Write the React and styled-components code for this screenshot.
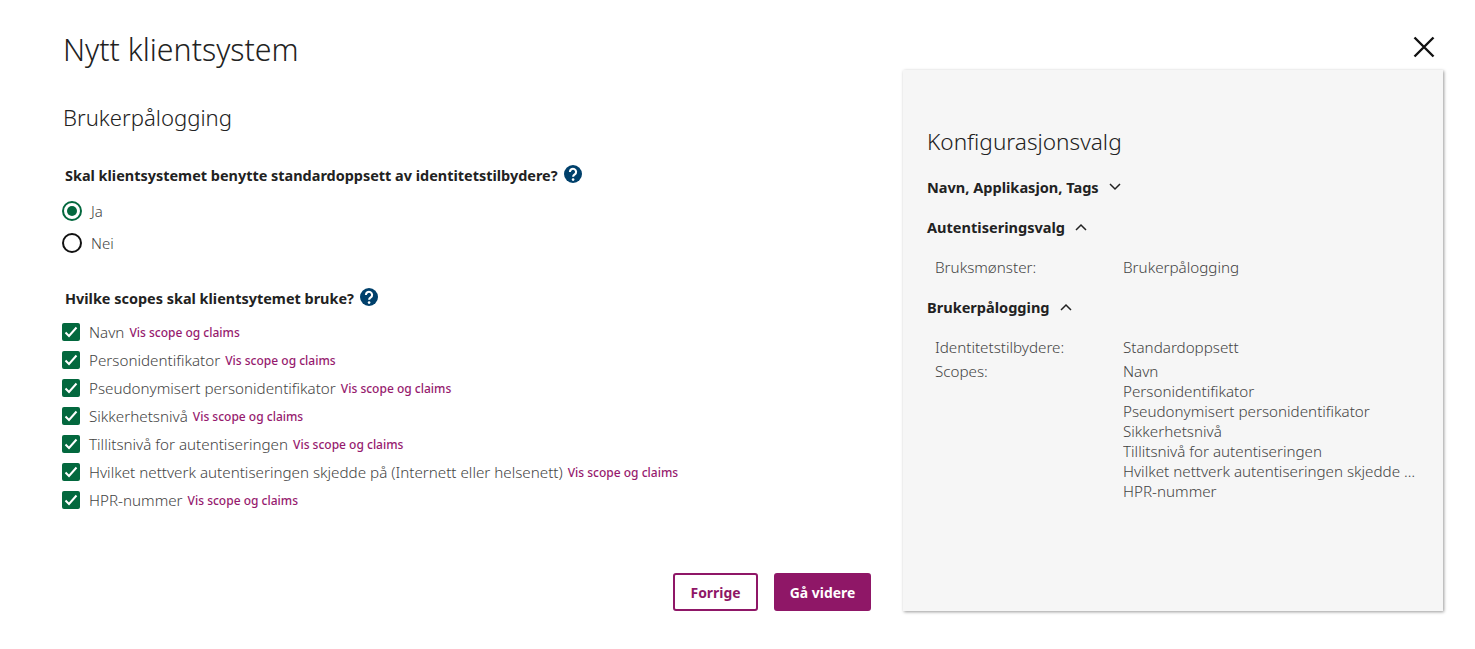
import React from "react";
import styled, { createGlobalStyle } from "styled-components";

const Global = createGlobalStyle`
  html, body { margin: 0; padding: 0; background: #fff; }
  body { font-family: "Noto Sans", "Open Sans", sans-serif; color: #333; overflow: hidden; }
`;

const Page = styled.div`
  position: relative;
  width: 1475px;
  height: 649px;
  box-sizing: border-box;
  display: grid;
  grid-template-columns: 808px 540px;
  column-gap: 32px;
  padding: 0 0 0 63px;
`;
const Main = styled.main`
  display: flex;
  flex-direction: column;
`;
const Title = styled.h1`
  margin: 30px 0 0;
  font-size: 30.3px;
  line-height: 40px;
  font-weight: 300;
  color: #222;
`;
const SubTitle = styled.h2`
  margin: 32px 0 0;
  font-size: 22.1px;
  line-height: 30px;
  font-weight: 300;
  color: #222;
`;
const Question = styled.div`
  display: flex;
  align-items: center;
  gap: 6px;
  margin-left: 2px;
  margin-top: ${(p) => p.$top}px;
  font-size: 14.45px;
  line-height: 22px;
  font-weight: 700;
  color: #222;
`;
const Help = styled.svg`
  width: 18px;
  height: 18px;
  margin-top: -5px;
`;
const RadioRow = styled.div`
  display: flex;
  align-items: center;
  gap: 9px;
  height: 32px;
  margin-left: -1px;
  font-size: 15px;
  font-weight: 300;
  color: #444;
`;
const RadioDot = styled.span`
  width: 20px;
  height: 20px;
  box-sizing: border-box;
  border-radius: 50%;
  border: 2px solid ${(p) => (p.$on ? "#03683e" : "#111")};
  display: flex;
  align-items: center;
  justify-content: center;
  &::after {
    content: "";
    width: 10px;
    height: 10px;
    border-radius: 50%;
    background: ${(p) => (p.$on ? "#03683e" : "transparent")};
  }
`;
const Radios = styled.div`
  margin-top: 8px;
  display: flex;
  flex-direction: column;
`;
const Checks = styled.div`
  margin-top: 8px;
  display: flex;
  flex-direction: column;
`;
const CheckRow = styled.div`
  display: flex;
  align-items: center;
  height: 28px;
  margin-left: -1px;
  font-size: 15.2px;
  font-weight: 300;
  color: #444;
`;
const Box = styled.span`
  flex: none;
  width: 18px;
  height: 18px;
  margin-right: 9px;
  border-radius: 2px;
  background: #03683e;
  display: flex;
  align-items: center;
  justify-content: center;
`;
const ScopeLink = styled.a`
  margin-left: 5px;
  font-size: 12px;
  font-weight: 500;
  color: #961a6e;
`;
const Actions = styled.div`
  margin-top: 59px;
  display: flex;
  justify-content: flex-end;
  gap: 16px;
`;
const Button = styled.button`
  height: 38px;
  width: ${(p) => p.$w}px;
  box-sizing: border-box;
  border-radius: 3px;
  border: 2px solid #8f1767;
  background: ${(p) => (p.$primary ? "#8f1767" : "#fff")};
  color: ${(p) => (p.$primary ? "#fff" : "#8f1767")};
  font: 700 13.9px "Noto Sans", sans-serif;
  padding: 0;
`;
const Panel = styled.aside`
  margin-top: 70px;
  height: 541px;
  box-sizing: border-box;
  padding: 55px 24px 0;
  background: #f6f6f6;
  box-shadow: 1px 1px 3px rgba(0, 0, 0, 0.4);
`;
const PanelTitle = styled.h2`
  margin: 0;
  font-size: 22.6px;
  line-height: 34px;
  font-weight: 300;
  color: #222;
`;
const SectionHead = styled.div`
  display: flex;
  align-items: center;
  gap: 10px;
  height: 24px;
  margin-top: ${(p) => p.$top}px;
  font-size: 14.55px;
  font-weight: 700;
  color: #222;
`;
const Details = styled.dl`
  margin: ${(p) => p.$top}px 0 0 8px;
  display: grid;
  grid-template-columns: 188px 296px;
  row-gap: 4px;
  font-size: 15.2px;
  line-height: 20px;
  font-weight: 300;
  color: #444;
`;
const Term = styled.dt``;
const Value = styled.dd`
  margin: 0;
`;
const Line = styled.div`
  white-space: nowrap;
  overflow: hidden;
  text-overflow: ellipsis;
`;
const Close = styled.button`
  position: absolute;
  left: 1412px;
  top: 35px;
  width: 24px;
  height: 24px;
  padding: 0;
  border: 0;
  background: none;
`;

const HelpIcon = () => (
  <Help viewBox="0 0 18 18">
    <circle cx="9" cy="9" r="9" fill="#00406b" />
    <path d="M5.9 6.9a3.1 3.1 0 1 1 4.9 2.5c-1.1.8-1.7 1.2-1.7 2.4" fill="none" stroke="#fff" strokeWidth="2.1" />
    <circle cx="9.1" cy="14.6" r="1.3" fill="#fff" />
  </Help>
);
const Chevron = ({ up }) => (
  <svg width="12" height="8" viewBox="0 0 12 8" fill="none" stroke="#222" strokeWidth="1.5">
    <path d={up ? "M1 7l5-5 5 5" : "M1 1l5 5 5-5"} />
  </svg>
);

const scopes = [
  "Navn",
  "Personidentifikator",
  "Pseudonymisert personidentifikator",
  "Sikkerhetsnivå",
  "Tillitsnivå for autentiseringen",
  "Hvilket nettverk autentiseringen skjedde på (Internett eller helsenett)",
  "HPR-nummer",
];

export default function App() {
  return (
    <Page>
      <Global />
      <Main>
        <Title>Nytt klientsystem</Title>
        <SubTitle>Brukerpålogging</SubTitle>
        <Question $top={33}>
          Skal klientsystemet benytte standardoppsett av identitetstilbydere? <HelpIcon />
        </Question>
        <Radios>
          <RadioRow><RadioDot $on /> Ja</RadioRow>
          <RadioRow><RadioDot /> Nei</RadioRow>
        </Radios>
        <Question $top={29}>
          Hvilke scopes skal klientsytemet bruke? <HelpIcon />
        </Question>
        <Checks>
          {scopes.map((s) => (
            <CheckRow key={s}>
              <Box>
                <svg width="14" height="12" viewBox="0 0 14 12" fill="none" stroke="#fff" strokeWidth="2">
                  <path d="M1.5 6.5l3.5 3.5 7.5-8.5" />
                </svg>
              </Box>
              {s} <ScopeLink>Vis scope og claims</ScopeLink>
            </CheckRow>
          ))}
        </Checks>
        <Actions>
          <Button $w={85}>Forrige</Button>
          <Button $w={97} $primary>Gå videre</Button>
        </Actions>
      </Main>
      <Panel>
        <PanelTitle>Konfigurasjonsvalg</PanelTitle>
        <SectionHead $top={16}>Navn, Applikasjon, Tags <Chevron /></SectionHead>
        <SectionHead $top={16}>Autentiseringsvalg <Chevron up /></SectionHead>
        <Details $top={18}>
          <Term>Bruksmønster:</Term>
          <Value>Brukerpålogging</Value>
        </Details>
        <SectionHead $top={18}>Brukerpålogging <Chevron up /></SectionHead>
        <Details $top={18}>
          <Term>Identitetstilbydere:</Term>
          <Value>Standardoppsett</Value>
          <Term>Scopes:</Term>
          <Value>
            {scopes.map((s) => <Line key={s}>{s}</Line>)}
          </Value>
        </Details>
      </Panel>
      <Close aria-label="Lukk">
        <svg width="24" height="24" viewBox="0 0 24 24" fill="none" stroke="#111" strokeWidth="2.4">
          <path d="M2.5 2.5l19 19M21.5 2.5l-19 19" />
        </svg>
      </Close>
    </Page>
  );
}
